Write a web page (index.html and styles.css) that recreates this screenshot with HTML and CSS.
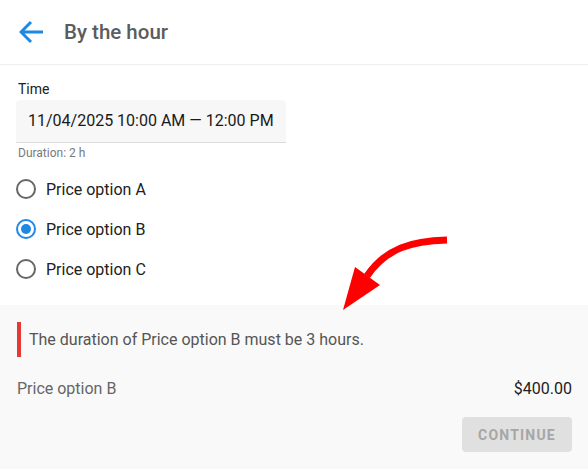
FILE: index.html
```html
<!DOCTYPE html>
<html>
<head>
<meta charset="utf-8">
<link rel="stylesheet" href="styles.css">
</head>
<body>
<div class="page">
  <header class="header">
    <svg class="back" width="24" height="24" viewBox="0 0 24 24" aria-hidden="true">
      <path d="M2 12H24M12 2L2 12l10 10" fill="none" stroke="#1e88e5" stroke-width="3" stroke-linejoin="miter"/>
    </svg>
    <h1 class="title">By the hour</h1>
  </header>
  <main class="content">
    <div class="label">Time</div>
    <div class="input">11/04/2025 10:00 AM — 12:00 PM</div>
    <div class="hint">Duration: 2 h</div>
    <div class="options">
      <label class="option"><span class="radio"></span>Price option A</label>
      <label class="option"><span class="radio checked"></span>Price option B</label>
      <label class="option"><span class="radio"></span>Price option C</label>
    </div>
  </main>
  <footer class="footer">
    <div class="alert">The duration of Price option B must be 3 hours.</div>
    <div class="price-row"><span class="price-name">Price option B</span><span class="price">$400.00</span></div>
    <div class="actions"><button class="continue" disabled>CONTINUE</button></div>
  </footer>
  <svg class="pointer" width="588" height="469" viewBox="0 0 588 469" aria-hidden="true">
    <path d="M447 240C412 241 386 248 367 276" fill="none" stroke="#ff0000" stroke-width="7"/>
    <polygon points="343,310 355,267 380,285" fill="#ff0000"/>
  </svg>
</div>
</body>
</html>
```
FILE: styles.css
```css
* { box-sizing: border-box; }
html, body { margin: 0; padding: 0; }
body {
  font-family: Roboto, "Noto Sans", sans-serif;
  background: #fff;
  color: #212121;
  width: 588px;
  height: 469px;
  overflow: hidden;
}
.page { position: relative; height: 469px; display: flex; flex-direction: column; }
.header {
  height: 65px;
  border-bottom: 1px solid #eeeeee;
  display: flex;
  align-items: center;
  padding-left: 19px;
}
.back { display: block; }
.title {
  margin: 0 0 0 21px;
  font-size: 20.5px;
  font-weight: 500;
  color: #5c5c5c;
  line-height: 24px;
}
.content { padding: 14px 16px 16px 16px; }
.label {
  font-size: 14px;
  line-height: 20px;
  padding-left: 2px;
  color: #212121;
}
.input {
  margin-top: 1px;
  width: 270px;
  height: 43px;
  background: #f7f7f7;
  border-bottom: 1px solid #dcdcdc;
  border-radius: 4px 4px 0 0;
  font-size: 16px;
  line-height: 42px;
  padding-left: 12px;
  color: #1a1a1a;
}
.hint {
  margin-top: 2px;
  font-size: 12px;
  line-height: 16px;
  color: #7a7a7a;
  padding-left: 2px;
}
.options { margin-top: 8px; display: flex; flex-direction: column; }
.option {
  height: 40px;
  display: flex;
  align-items: center;
  font-size: 16px;
  color: #212121;
}
.radio {
  width: 20px;
  height: 20px;
  border: 2px solid #666;
  border-radius: 50%;
  margin-right: 10px;
  position: relative;
}
.radio.checked { border-color: #1e88e5; }
.radio.checked::after {
  content: "";
  position: absolute;
  left: 3px; top: 3px;
  width: 10px; height: 10px;
  border-radius: 50%;
  background: #1e88e5;
}
.footer {
  flex: 1;
  background: #f9f9f9;
  padding: 17px 16px 0 17px;
}
.alert {
  border-left: 4px solid #e53935;
  height: 35px;
  line-height: 35px;
  padding-left: 8px;
  font-size: 16px;
  color: #555;
}
.price-row {
  margin-top: 20px;
  display: flex;
  justify-content: space-between;
  font-size: 16px;
  line-height: 24px;
}
.price-name { color: #666; }
.price { color: #212121; }
.actions { margin-top: 16px; display: flex; justify-content: flex-end; }
.continue {
  width: 110px;
  height: 35px;
  border: none;
  border-radius: 4px;
  background: #e0e0e0;
  color: #a6a6a6;
  font-family: Roboto, sans-serif;
  font-weight: 700;
  font-size: 14px;
  letter-spacing: 1.2px;
  padding: 0;
}
.pointer { position: absolute; left: 0; top: 0; pointer-events: none; }
```
